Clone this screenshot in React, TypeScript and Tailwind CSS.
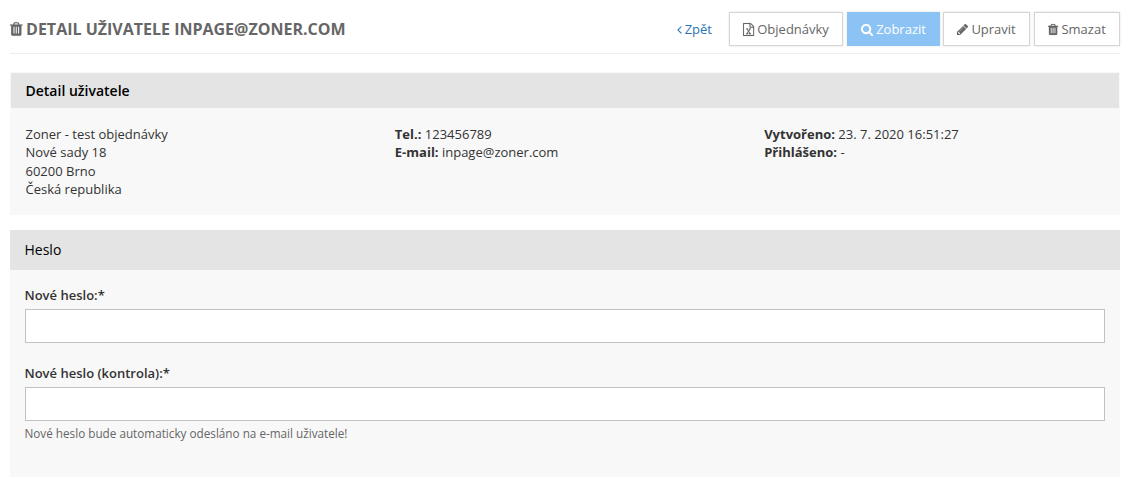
import { clsx } from "clsx";
import type { ReactNode } from "react";

const ICONS = {
  trash: {
    viewBox: "192 0 1408 1792",
    d: "M704 1376v-704q0-14-9-23t-23-9h-64q-14 0-23 9t-9 23v704q0 14 9 23t23 9h64q14 0 23-9t9-23zm256 0v-704q0-14-9-23t-23-9h-64q-14 0-23 9t-9 23v704q0 14 9 23t23 9h64q14 0 23-9t9-23zm256 0v-704q0-14-9-23t-23-9h-64q-14 0-23 9t-9 23v704q0 14 9 23t23 9h64q14 0 23-9t9-23zm-544-992h448l-48-117q-7-9-17-11h-317q-10 2-17 11zm928 32v64q0 14-9 23t-23 9h-96v948q0 83-47 143.5t-113 60.5h-832q-66 0-113-58.5t-47-141.5v-952h-96q-14 0-23-9t-9-23v-64q0-14 9-23t23-9h309l70-167q15-37 54-63t79-26h320q40 0 79 26t54 63l70 167h309q14 0 23 9t9 23z",
  },
  search: {
    viewBox: "64 0 1664 1792",
    d: "M1216 832q0-185-131.5-316.5t-316.5-131.5-316.5 131.5-131.5 316.5 131.5 316.5 316.5 131.5 316.5-131.5 131.5-316.5zm512 832q0 52-38 90t-90 38q-54 0-90-38l-343-342q-179 124-399 124-143 0-273.5-55.5t-225-150-150-225-55.5-273.5 55.5-273.5 150-225 225-150 273.5-55.5 273.5 55.5 225 150 150 225 55.5 273.5q0 220-124 399l343 343q37 37 37 90z",
  },
  pencil: {
    viewBox: "128 0 1536 1792",
    d: "M491 1536l91-91-235-235-91 91v107h128v128h107zm523-928q0-22-22-22-10 0-17 7l-542 542q-7 7-7 17 0 22 22 22 10 0 17-7l542-542q7-7 7-17zm-54-192l416 416-832 832h-416v-416zm683 96q0 53-37 90l-166 166-416-416 166-165q36-38 90-38 53 0 91 38l235 234q37 39 37 91z",
  },
  excel: {
    viewBox: "128 0 1536 1792",
    d: "M1596 380q28 28 48 76t20 88v1152q0 40-28 68t-68 28h-1344q-40 0-68-28t-28-68v-1600q0-40 28-68t68-28h896q40 0 88 20t76 48zm-444-244v376h376q-10-29-22-41l-313-313q-12-12-41-22zm384 1528v-1024h-416q-40 0-68-28t-28-68v-416h-768v1536h1280zm-979-234v106h281v-106h-75l103-161q5-7 10-16.5t7.5-13.5 3.5-4h2q1 4 5 10 2 4 4.5 7.5t6 8 6.5 8.5l107 161h-76v106h291v-106h-68l-192-273 195-282h67v-107h-279v107h74l-103 159q-4 7-10 16.5t-9 13.5l-2 3h-2q-1-4-5-10-6-11-17-23l-106-159h76v-107h-290v107h68l189 272-194 283h-68z",
  },
  angleLeft: {
    viewBox: "570 0 640 1792",
    d: "M1203 544q0 13-10 23l-393 393 393 393q10 10 10 23t-10 23l-50 50q-10 10-23 10t-23-10l-466-466q-10-10-10-23t10-23l466-466q10-10 23-10t23 10l50 50q10 10 10 23z",
  },
};

function Icon({ name, className }: { name: keyof typeof ICONS; className?: string }) {
  return (
    <svg viewBox={ICONS[name].viewBox} fill="currentColor" stroke="currentColor" strokeWidth={15} aria-hidden className={clsx("h-[1em] w-auto shrink-0 overflow-visible", className)}>
      <path d={ICONS[name].d} />
    </svg>
  );
}

function ActionButton({
  icon,
  active,
  className,
  children,
}: {
  icon: keyof typeof ICONS;
  active?: boolean;
  className: string;
  children: ReactNode;
}) {
  return (
    <button
      type="button"
      className={clsx(
        "flex h-[34px] items-center justify-center gap-[3px] border shadow-[0_0_2px_rgba(0,0,0,0.12)]",
        active ? "border-[#8bc3f5] bg-[#8bc3f5] text-white" : "border-[#d5d5d5] bg-white text-[#666]",
        className,
      )}
    >
      <Icon name={icon} />
      {children}
    </button>
  );
}

function PasswordField({ id, label, help }: { id: string; label: string; help?: string }) {
  return (
    <div>
      <label htmlFor={id} className="-ml-[0.5px] block h-[23px] font-semibold leading-[18px]">
        {label}
      </label>
      <input id={id} type="password" className="block h-[34px] w-full border border-[#c2c2c2] bg-white px-3 outline-none" />
      {help ? <p className="-ml-[0.5px] mt-[3px] text-[11.72px] leading-[18px] text-[#666]">{help}</p> : null}
    </div>
  );
}

export default function App() {
  return (
    <main className="h-[486px] bg-white px-[10px] pt-3 font-['Open_Sans',sans-serif] text-[13px] leading-[18.5px] text-[#333]">
      <header className="flex h-[42px] items-start justify-between border-b border-[#eee]">
        <h1 className="-ml-[0.5px] flex h-[34px] items-center gap-1 text-[16px] font-bold text-[#666]">
          <Icon name="trash" />
          DETAIL UŽIVATELE INPAGE@ZONER.COM
        </h1>
        <div className="flex items-center gap-1">
          <a href="#" className="mr-[13px] flex items-center gap-[3px] text-[#2a76b5]">
            <Icon name="angleLeft" />
            Zpět
          </a>
          <ActionButton icon="excel" className="w-[114px]">Objednávky</ActionButton>
          <ActionButton icon="search" active className="w-[93px]">Zobrazit</ActionButton>
          <ActionButton icon="pencil" className="-ml-px w-[87px]">Upravit</ActionButton>
          <ActionButton icon="trash" className="w-[86px]">Smazat</ActionButton>
        </div>
      </header>

      <section className="mt-[18px] h-[143px] border border-[#f8f8f8] bg-[#f8f8f8]">
        <h2 className="flex h-[35px] items-center bg-[#e4e4e4] px-[14.5px] pt-0.5 text-[14px] font-semibold text-black">
          Detail uživatele
        </h2>
        <div className="grid grid-cols-3 pt-[16.8px]">
          <div className="pl-[14.5px]">
            <p>Zoner - test objednávky</p>
            <p>Nové sady 18</p>
            <p>60200 Brno</p>
            <p>Česká republika</p>
          </div>
          <div className="pl-[14.5px]">
            <p><b>Tel.:</b> 123456789</p>
            <p><b>E-mail:</b> inpage@zoner.com</p>
          </div>
          <div className="pl-[14.5px]">
            <p><b>Vytvořeno:</b> 23. 7. 2020 16:51:27</p>
            <p><b>Přihlášeno:</b> -</p>
          </div>
        </div>
      </section>

      <section className="mt-[15px] h-[247px] bg-[#f8f8f8]">
        <h2 className="flex h-10 items-center bg-[#e4e4e4] px-[14.5px] text-[14px] text-black">Heslo</h2>
        <div className="flex flex-col gap-[21px] px-[15px] pt-4">
          <PasswordField id="password" label="Nové heslo:*" />
          <PasswordField
            id="password-check"
            label="Nové heslo (kontrola):*"
            help="Nové heslo bude automaticky odesláno na e-mail uživatele!"
          />
        </div>
      </section>
    </main>
  );
}
